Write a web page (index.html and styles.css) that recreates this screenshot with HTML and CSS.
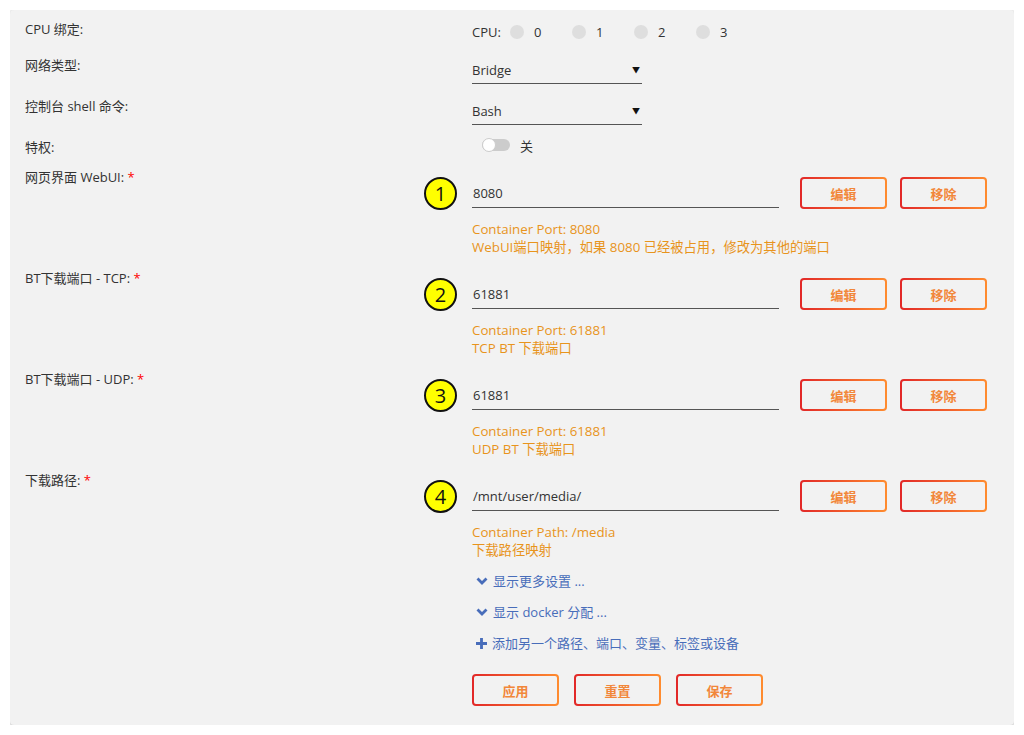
FILE: index.html
```html
<!DOCTYPE html>
<html lang="zh-CN">
<head>
  <meta charset="UTF-8" />
  <title>Docker 容器设置</title>
  <link rel="stylesheet" href="styles.css">
</head>
<body>

<div class="panel">

  <div class="row row-cpu">
    <div class="label">CPU 绑定:</div>
    <div class="field cpu">
      <span class="cpu-title">CPU:</span>
      <span class="core"><i class="dot"></i>0</span>
      <span class="core"><i class="dot"></i>1</span>
      <span class="core"><i class="dot"></i>2</span>
      <span class="core"><i class="dot"></i>3</span>
    </div>
  </div>

  <div class="row row-select">
    <div class="label">网络类型:</div>
    <div class="field">
      <div class="select">Bridge <span class="caret">&#9660;</span></div>
    </div>
  </div>

  <div class="row row-select">
    <div class="label">控制台 shell 命令:</div>
    <div class="field">
      <div class="select">Bash <span class="caret">&#9660;</span></div>
    </div>
  </div>

  <div class="row row-switch">
    <div class="label">特权:</div>
    <div class="field switch">
      <span class="toggle"><i class="knob"></i></span>
      <span>关</span>
    </div>
  </div>

  <!-- port / path mappings -->
  <div class="row port">
    <div class="label">网页界面 WebUI: <span class="req">*</span></div>
    <div class="field">
      <div class="entry">
        <span class="badge">1</span>
        <div class="input">8080</div>
        <button class="btn">编辑</button>
        <button class="btn">移除</button>
      </div>
      <div class="desc">Container Port: 8080<br>WebUI端口映射，如果 8080 已经被占用，修改为其他的端口</div>
    </div>
  </div>

  <div class="row port">
    <div class="label">BT下载端口 - TCP: <span class="req">*</span></div>
    <div class="field">
      <div class="entry">
        <span class="badge">2</span>
        <div class="input">61881</div>
        <button class="btn">编辑</button>
        <button class="btn">移除</button>
      </div>
      <div class="desc">Container Port: 61881<br>TCP BT 下载端口</div>
    </div>
  </div>

  <div class="row port">
    <div class="label">BT下载端口 - UDP: <span class="req">*</span></div>
    <div class="field">
      <div class="entry">
        <span class="badge">3</span>
        <div class="input">61881</div>
        <button class="btn">编辑</button>
        <button class="btn">移除</button>
      </div>
      <div class="desc">Container Port: 61881<br>UDP BT 下载端口</div>
    </div>
  </div>

  <div class="row port last">
    <div class="label">下载路径: <span class="req">*</span></div>
    <div class="field">
      <div class="entry">
        <span class="badge">4</span>
        <div class="input">/mnt/user/media/</div>
        <button class="btn">编辑</button>
        <button class="btn">移除</button>
      </div>
      <div class="desc">Container Path: /media<br>下载路径映射</div>
    </div>
  </div>

  <div class="row extras">
    <div></div>
    <div class="field">
      <a class="link" href="#">
        <svg viewBox="0 0 12 8" width="12" height="8"><path d="M1.5 1.5 6 6 10.5 1.5" fill="none" stroke="currentColor" stroke-width="2.8"/></svg>
        显示更多设置 ...
      </a>
      <a class="link" href="#">
        <svg viewBox="0 0 12 8" width="12" height="8"><path d="M1.5 1.5 6 6 10.5 1.5" fill="none" stroke="currentColor" stroke-width="2.8"/></svg>
        显示 docker 分配 ...
      </a>
      <a class="link" href="#">
        <svg viewBox="0 0 10 10" width="11" height="11"><path d="M5 0v10M0 5h10" fill="none" stroke="currentColor" stroke-width="2.6"/></svg>
        添加另一个路径、端口、变量、标签或设备
      </a>
      <div class="actions">
        <button class="btn">应用</button>
        <button class="btn">重置</button>
        <button class="btn">保存</button>
      </div>
    </div>
  </div>

</div>

</body>
</html>
```

FILE: styles.css
```css
body {
  margin: 10px;
  background: #fff;
  font-family: 'Open Sans', 'Noto Sans CJK SC', sans-serif;
  font-size: 13px;
  color: #333;
}
.panel {
  background: #f2f2f2;
  border-radius: 4px;
  box-shadow: 0 1px 5px rgba(0, 0, 0, 0.35);
  padding: 9px 27px 19px 15px;
}
.row {
  display: grid;
  grid-template-columns: 447px 1fr;
}
.label {
  line-height: 20px;
}
.req {
  color: #f00;
}

/* cpu pinning */
.row-cpu {
  height: 36px;
}
.cpu {
  display: flex;
  align-items: center;
  height: 20px;
  padding-top: 3px;
}
.cpu-title {
  margin-right: 9px;
}
.core {
  display: inline-flex;
  align-items: center;
  width: 62px;
}
.dot {
  width: 14px;
  height: 14px;
  border-radius: 50%;
  background: #dedede;
  margin-right: 10px;
}

/* selects */
.row-select {
  height: 41px;
}
.select {
  width: 170px;
  margin-top: 5px;
  line-height: 20px;
  padding-bottom: 3px;
  border-bottom: 1px solid #555;
  position: relative;
  box-sizing: border-box;
  height: 24px;
}
.caret {
  position: absolute;
  right: 2px;
  top: 0;
  font-size: 8px;
  color: #111;
}

/* privileged switch */
.row-switch {
  height: 30px;
}
.switch {
  display: flex;
  align-items: center;
  height: 16px;
}
.toggle {
  width: 28px;
  height: 12px;
  border-radius: 6px;
  background: #ccc;
  position: relative;
  margin: 0 10px 0 10px;
}
.knob {
  position: absolute;
  left: 0;
  top: -1px;
  width: 12px;
  height: 12px;
  background: #fff;
  border: 1px solid #ccc;
  border-radius: 50%;
}

/* mappings */
.port .field {
  padding: 10px 0 12px;
}
.entry {
  display: flex;
  align-items: flex-start;
  position: relative;
}
.badge {
  position: absolute;
  left: -48px;
  top: 0;
  width: 33px;
  height: 33px;
  box-sizing: border-box;
  border: 2px solid #111;
  border-radius: 50%;
  background: #ff0;
  color: #111;
  font-size: 20px;
  line-height: 29px;
  text-align: center;
}
.input {
  width: 307px;
  margin: 6px 21px 0 0;
  line-height: 20px;
  padding-bottom: 4px;
  border-bottom: 1px solid #555;
  padding-left: 1px;
  box-sizing: border-box;
}
.btn {
  width: 87px;
  height: 32px;
  margin-right: 13px;
  border: 2px solid transparent;
  border-radius: 4px;
  background: linear-gradient(#f2f2f2, #f2f2f2) padding-box,
              linear-gradient(90deg, #e22828, #ff8c2f) border-box;
  color: #f2873a;
  font-family: inherit;
  font-size: 13px;
  font-weight: bold;
  padding: 0;
}
.desc {
  margin-top: 11px;
  line-height: 18px;
  color: #e8941c;
  font-size: 13.3px;
}

/* links and actions */
.link {
  display: flex;
  align-items: center;
  gap: 5px;
  color: #486dba;
  text-decoration: none;
  line-height: 20px;
  margin-bottom: 11px;
  padding-left: 4px;
}
.link svg {
  flex: none;
}
.actions {
  display: flex;
  margin-top: 21px;
}
.actions .btn {
  margin-right: 15px;
}
```
